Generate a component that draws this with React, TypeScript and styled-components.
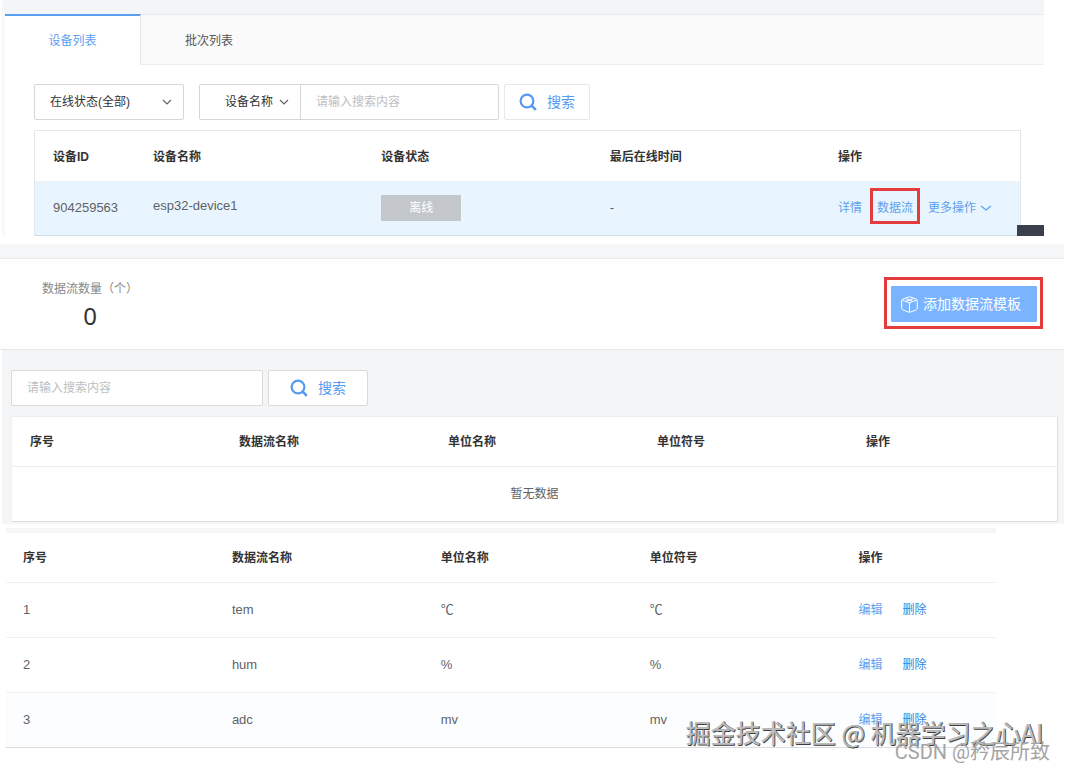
import React from "react";
import styled, { createGlobalStyle, css } from "styled-components";

const GlobalStyle = createGlobalStyle`
  *, *::before, *::after { box-sizing: border-box; }
  body {
    margin: 0;
    background: #fff;
    color: #333;
    font: 12px/16px "Liberation Sans", "Noto Sans CJK SC", sans-serif;
  }
  button, input, select { font: inherit; color: inherit; margin: 0; }
  a { text-decoration: none; }
`;

const Page = styled.main`
  position: relative;
  padding-bottom: 21px;
  overflow: hidden;
`;

const DevicePanel = styled.section`
  position: relative;
  margin: 0 22px 8px 2px;
  border-top: 14px solid #f3f5f8;
  border-left: 3px solid #f7f8fa;
`;

const TabBar = styled.nav`
  display: flex;
  height: 51px;
  background: #fafafa;
  border-top: 1px solid #e8eaec;
  border-bottom: 1px solid #ececee;
`;

const Tab = styled.button<{ $active?: boolean }>`
  width: 136px;
  height: 51px;
  margin-top: -1px;
  border: 0;
  border-top: 2px solid transparent;
  background: none;
  color: #555;
  ${(p) =>
    p.$active &&
    css`
      background: #fff;
      color: #5b9ff2;
      border-top-color: #5b9ff2;
      border-right: 1px solid #e6e8ea;
    `}
`;

const DeviceBody = styled.div`
  padding: 19px 23px 0 29px;
`;

const Toolbar = styled.div`
  display: flex;
  align-items: center;
  gap: 5px;
  margin-bottom: 10px;
`;

const SelectBox = styled.label<{ $width: number; $divider?: boolean }>`
  position: relative;
  display: flex;
  align-items: center;
  width: ${(p) => p.$width}px;
  height: 36px;
  background: #fff;
  border: 1px solid #d5d6d8;
  border-radius: 2px;
  ${(p) =>
    p.$divider &&
    css`
      height: 34px;
      border-width: 0 1px 0 0;
      border-radius: 0;
    `}

  select {
    flex: 1;
    width: 100%;
    height: 100%;
    padding: 0 0 0 ${(p) => (p.$divider ? 25 : 15)}px;
    border: 0;
    background: none;
    appearance: none;
    outline: none;
  }
  svg {
    position: absolute;
    right: 11px;
    pointer-events: none;
  }
`;

const SearchGroup = styled.div`
  display: flex;
  width: 300px;
  height: 36px;
  margin-left: 10px;
  border: 1px solid #d5d6d8;
  border-radius: 2px;
`;

const TextInput = styled.input<{ $boxed?: boolean }>`
  flex: 1;
  min-width: 0;
  padding: 0 15px;
  border: 0;
  outline: none;
  background: #fff;
  &::placeholder { color: #bcbec2; opacity: 1; }
  ${(p) =>
    p.$boxed &&
    css`
      flex: 0 0 252px;
      height: 36px;
      border: 1px solid #d9dadc;
      border-radius: 2px;
    `}
`;

const SearchButton = styled.button<{ $wide?: boolean }>`
  display: flex;
  align-items: center;
  justify-content: center;
  gap: 10px;
  width: ${(p) => (p.$wide ? 100 : 86)}px;
  height: 36px;
  padding: 0;
  border: 1px solid ${(p) => (p.$wide ? "#d9dadc" : "#e6e7ea")};
  border-radius: 2px;
  background: #fff;
  color: #559af0;
  font-size: 14px;
`;

const Table = styled.table<{ $inset?: number; $headHeight?: number }>`
  width: 100%;
  table-layout: fixed;
  border-collapse: collapse;
  background: #fff;

  th, td {
    padding: 0 0 0 ${(p) => p.$inset ?? 18}px;
    text-align: left;
  }
  th {
    height: ${(p) => p.$headHeight ?? 49}px;
    padding-top: 2px;
    font-weight: 700;
  }
  td { height: 55px; color: #606266; font-size: 13px; }
`;

const TableFrame = styled.div`
  border: 1px solid #e4e7ea;
  border-bottom-color: #cddfe8;
`;

const DeviceRow = styled.tr`
  background: #e9f5fe;
  && td { height: 54px; }
`;

const DeviceName = styled.span`
  display: block;
  padding-bottom: 4px;
`;

const StatusTag = styled.span`
  display: block;
  width: 80px;
  padding: 5px 0;
  border-radius: 1px;
  background: #c3c7cb;
  color: #fff;
  font-size: 12px;
  text-align: center;
`;

const Actions = styled.div<{ $gap: number }>`
  display: flex;
  align-items: center;
  gap: ${(p) => p.$gap}px;
  font-size: 12px;
`;

const ActionLink = styled.a<{ $marked?: boolean; $strong?: boolean }>`
  display: inline-flex;
  align-items: center;
  gap: 4px;
  color: ${(p) => (p.$strong ? "#2f86e4" : "#5d9ff0")};
  ${(p) =>
    p.$marked &&
    css`
      height: 36px;
      margin-top: -4px;
      padding: 4px 4px 0;
      border: 3px solid #e43c3c;
    `}
`;

const CornerBlock = styled.div`
  position: absolute;
  right: 0;
  bottom: 0;
  width: 27px;
  height: 11px;
  background: #3a3f4b;
`;

const StreamPanel = styled.section`
  margin-right: 2px;
  border-top: 14px solid #f5f6f7;
`;

const Summary = styled.header`
  display: flex;
  justify-content: space-between;
  align-items: flex-start;
  padding: 18px 21px 14px 42px;
  border-top: 1px solid #e8eaec;
  border-bottom: 1px solid #e6e8ea;
`;

const Stat = styled.dl`
  margin: 4px 0 0;
  text-align: center;
  dt { color: #888; }
  dd {
    margin: 0;
    color: #303133;
    font: 24px/38px "Noto Sans", sans-serif;
  }
`;

const MarkedArea = styled.div`
  padding: 6px 3px 4px 4px;
  border: 3px solid #e43c3c;
`;

const AddButton = styled.button`
  display: flex;
  align-items: center;
  gap: 5px;
  width: 146px;
  height: 36px;
  padding: 0 10px;
  border: 0;
  border-radius: 1px;
  background: #7ab4ff;
  color: #fff;
  font-size: 14px;
  white-space: nowrap;
`;

const StreamBody = styled.div`
  margin-left: 2px;
  padding: 20px 6px 2px 9px;
  background: #f3f5f7;
`;

const StreamFrame = styled.div`
  border: 1px solid #dcdfe1;
  border-top-color: #ebedef;
  border-left-color: #f0f2f4;
  thead th { border-bottom: 1px solid #ebedef; }
`;

const EmptyCell = styled.td`
  && { padding: 0; text-align: center; font-size: 12px; }
`;

const TemplatePanel = styled.section`
  margin: 4px 70px 0 6px;
  border-top: 5px solid #f5f6f7;
  border-bottom: 1px solid #d8dcdf;
  tbody td { border-top: 1px solid #eff1f3; }
  tbody tr:last-child { background: #fbfdfe; }
`;

const Watermarks = styled.div`
  position: absolute;
  right: 16px;
  bottom: 5px;
  font-family: "Noto Sans CJK SC", sans-serif;
  text-align: right;
  white-space: nowrap;
  pointer-events: none;
`;

const MainMark = styled.p`
  margin: 0 7px 0 0;
  font-size: 25px;
  line-height: 32px;
  color: #bdbdbd;
  text-shadow: 1px 0 0 #6a6a6a, 1px 1px 0 #3c3c3c;
`;

const SubMark = styled.p`
  margin: -8px 0 0;
  font-family: Roboto, "Noto Sans CJK SC", sans-serif;
  font-size: 20px;
  line-height: 24px;
  color: #a4a4a4;
`;

const Chevron = ({ color = "#606266", size = 10 }: { color?: string; size?: number }) => (
  <svg width={size} height="6" viewBox={`0 0 ${size} 6`} fill="none" stroke={color} aria-hidden="true">
    <path d={`M1 1 L${size / 2} 5 L${size - 1} 1`} strokeWidth="1.2" />
  </svg>
);

const SearchIcon = () => (
  <svg width="18" height="18" viewBox="0 0 18 18" fill="none" stroke="#559af0" strokeWidth="2.2" aria-hidden="true">
    <circle cx="8" cy="8" r="6.4" />
    <path d="M12.4 12.4 L16.8 16.8" strokeWidth="2.6" />
  </svg>
);

const CubeIcon = () => (
  <svg width="17" height="17" viewBox="0 0 17 17" fill="none" stroke="#fff" strokeLinejoin="round" aria-hidden="true">
    <path d="M8.5 0.7 L15.4 3.2 Q16.3 3.6 16.3 4.6 V12.4 Q16.3 13.4 15.4 13.8 L9.6 16 Q8.5 16.4 7.4 16 L1.6 13.8 Q0.7 13.4 0.7 12.4 V4.6 Q0.7 3.6 1.6 3.2 Z" />
    <path d="M1 4 L8.5 6.8 L16 4 M8.5 6.8 V16.2 M5 5.4 L12 2.6 M5 2.6 L12 5.4" />
  </svg>
);

const streamHeads = ["序号", "数据流名称", "单位名称", "单位符号", "操作"];
const templates = [
  ["1", "tem", "℃", "℃"],
  ["2", "hum", "%", "%"],
  ["3", "adc", "mv", "mv"],
];

const StreamHead = () => (
  <thead>
    <tr>{streamHeads.map((h) => <th key={h} scope="col">{h}</th>)}</tr>
  </thead>
);

export default function App() {
  return (
    <>
      <GlobalStyle />
      <Page>
        <DevicePanel>
          <TabBar>
            <Tab $active>设备列表</Tab>
            <Tab>批次列表</Tab>
          </TabBar>
          <DeviceBody>
            <Toolbar>
              <SelectBox $width={150}>
                <select aria-label="在线状态"><option>在线状态(全部)</option></select>
                <Chevron />
              </SelectBox>
              <SearchGroup>
                <SelectBox $width={101} $divider>
                  <select aria-label="搜索字段"><option>设备名称</option></select>
                  <Chevron />
                </SelectBox>
                <TextInput aria-label="搜索设备" placeholder="请输入搜索内容" />
              </SearchGroup>
              <SearchButton><SearchIcon />搜索</SearchButton>
            </Toolbar>
            <TableFrame>
              <Table $headHeight={50}>
                <colgroup>
                  <col style={{ width: 100 }} /><col /><col /><col /><col style={{ width: 200 }} />
                </colgroup>
                <thead>
                  <tr>
                    {["设备ID", "设备名称", "设备状态", "最后在线时间", "操作"].map((h) => (
                      <th key={h} scope="col">{h}</th>
                    ))}
                  </tr>
                </thead>
                <tbody>
                  <DeviceRow>
                    <td>904259563</td>
                    <td><DeviceName>esp32-device1</DeviceName></td>
                    <td><StatusTag>离线</StatusTag></td>
                    <td>-</td>
                    <td>
                      <Actions $gap={8}>
                        <ActionLink href="#detail">详情</ActionLink>
                        <ActionLink href="#streams" $marked>数据流</ActionLink>
                        <ActionLink href="#more">更多操作<Chevron color="#5d9ff0" size={12} /></ActionLink>
                      </Actions>
                    </td>
                  </DeviceRow>
                </tbody>
              </Table>
            </TableFrame>
          </DeviceBody>
          <CornerBlock />
        </DevicePanel>

        <StreamPanel>
          <Summary>
            <Stat>
              <dt>数据流数量（个）</dt>
              <dd>0</dd>
            </Stat>
            <MarkedArea>
              <AddButton><CubeIcon />添加数据流模板</AddButton>
            </MarkedArea>
          </Summary>
          <StreamBody>
            <Toolbar>
              <TextInput $boxed aria-label="搜索数据流" placeholder="请输入搜索内容" />
              <SearchButton $wide><SearchIcon />搜索</SearchButton>
            </Toolbar>
            <StreamFrame>
              <Table>
                <StreamHead />
                <tbody><tr><EmptyCell colSpan={5}>暂无数据</EmptyCell></tr></tbody>
              </Table>
            </StreamFrame>
          </StreamBody>
        </StreamPanel>

        <TemplatePanel>
          <Table $inset={17}>
            <colgroup>
              {streamHeads.map((h, i) => <col key={h} style={{ width: i < 4 ? "21.1%" : "auto" }} />)}
            </colgroup>
            <StreamHead />
            <tbody>
              {templates.map((row) => (
                <tr key={row[0]}>
                  {row.map((cell, i) => <td key={i}>{cell}</td>)}
                  <td>
                    <Actions $gap={20}>
                      <ActionLink href="#edit">编辑</ActionLink>
                      <ActionLink href="#delete" $strong>删除</ActionLink>
                    </Actions>
                  </td>
                </tr>
              ))}
            </tbody>
          </Table>
        </TemplatePanel>

        <Watermarks>
          <MainMark>掘金技术社区 @ 机器学习之心AI</MainMark>
          <SubMark>CSDN @矜辰所致</SubMark>
        </Watermarks>
      </Page>
    </>
  );
}
